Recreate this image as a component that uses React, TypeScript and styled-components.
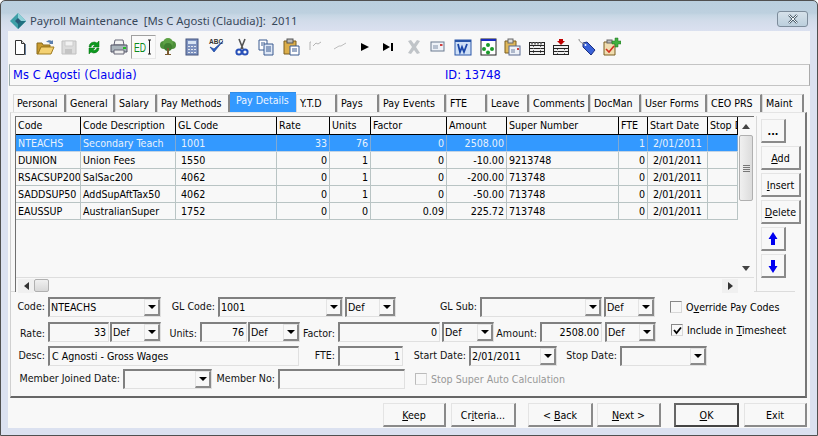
import React from "react";
import styled, { createGlobalStyle, css } from "styled-components";

const Global = createGlobalStyle`
  html, body { margin: 0; padding: 0; background: #fff; }
  body { font-family: "DejaVu Sans Condensed", "DejaVu Sans", sans-serif; font-size: 10.6px; color: #000; }
`;
const Win = styled.div`
  width: 818px; height: 436px; box-sizing: border-box; overflow: hidden;
  display: flex; flex-direction: column;
  border: 1px solid #505050; border-radius: 5px 5px 0 0;
  background: linear-gradient(#bacfde 0, #bdd0df 12px, #c6d6e4 14px, #d2dcea 20px, #dbe1f0 30px);
`;
const TitleBar = styled.div`
  height: 30px; flex: none; display: flex; align-items: center; box-sizing: border-box;
  padding: 9px 9px 0 9px; gap: 4px;
`;
const TitleText = styled.div`
  flex: 1; font-size: 11.3px; color: #37475a; white-space: pre; font-family: "Noto Sans", sans-serif;
`;
const CloseBtn = styled.div`
  width: 31px; height: 16px; box-sizing: border-box; margin-top: -3px; margin-right: 0;
  border: 1px solid #7d8c9b; border-radius: 3px; background: linear-gradient(#d6e1ea, #bccfdd);
  display: flex; align-items: center; justify-content: center;
`;
const Body = styled.div`
  flex: 1; margin: 0 7px 7px 7px; background: #f8f8f8; display: flex; flex-direction: column; min-height: 0;
`;
const Toolbar = styled.div`
  height: 31px; flex: none; display: flex; align-items: center;
`;
const ToolCell = styled.div<{ $pressed?: boolean }>`
  width: 24.6px; height: 24px; flex: none; display: flex; align-items: center; justify-content: center; box-sizing: border-box;
  ${p => p.$pressed && css`border: 1px solid #a0a0a0; border-right-color: #e8e8e8; border-bottom-color: #e8e8e8; background: #fafafa;`}
`;
const NameBar = styled.div`
  height: 22px; flex: none; margin: 2px 0 0 1px; box-sizing: border-box; display: flex; align-items: center;
  border: 1px solid #c4c4c4; border-right-color: #aaa; border-left-color: #9aa; color: #0000f0;
  padding-left: 3px;
  font-family: "DejaVu Sans", sans-serif;
`;
const NameText = styled.div`width: 432px; font-size: 11.4px; letter-spacing: 0.1px;`;
const IdText = styled.div`font-size: 11.4px;`;
const TabRow = styled.div`
  display: flex; height: 20px; margin-top: 6px; padding-left: 5px; flex: none; align-items: flex-end;
`;
const Tab = styled.div<{ $w: number; $on?: boolean }>`
  width: ${p => p.$w}px; flex: none; box-sizing: border-box; white-space: nowrap; overflow: hidden;
  height: ${p => (p.$on ? 20 : 18)}px; margin-right: 0; padding: 0 0 0 ${p => (p.$on ? 6 : 3)}px;
  display: flex; align-items: center;
  ${p => p.$on
    ? css`background: #3399ff; color: #eef5ff; padding-bottom: 5px; border-top: 1px solid #2f8ce6;`
    : css`padding-bottom: 2px; border-top: 1px solid #dcdcdc; border-left: 1px solid #d8d8d8; border-right: 2px solid #888;`}
`;
const Panel = styled.div`
  width: 797px; height: 286px; margin-left: 2px; flex: none; box-sizing: border-box; display: flex; flex-direction: column;
  border-left: 1px solid #d0d0d0; border-right: 2px solid #777; border-bottom: 2px solid #666; border-top: 1px solid #e4e4e4;
`;
const TopArea = styled.div`
  height: 179px; flex: none; display: flex; padding: 3px 0 0 4px; box-sizing: border-box; margin-right: 10px; border-bottom: 1px solid #dcdcdc;
`;
const GridBox = styled.div`
  width: 739px; height: 176px; flex: none; display: flex; flex-direction: column; box-sizing: border-box;
  border-left: 1px solid #707070; border-top: 1px solid #707070;
`;
const GridMain = styled.div`height: 160px; flex: none; display: flex; border-bottom: 1px solid #dedede;`;
const Cols = styled.div`width: 722px; flex: none; overflow: hidden;`;
const Row = styled.div<{ $sel?: boolean }>`
  display: flex; height: 17px; box-sizing: border-box; flex: none;
  border-bottom: 1px solid #b9c4c4;
  ${p => p.$sel && css`background: #3399ff; color: #e9f2fc; border-bottom-color: #c4d4e4;`}
`;
const HeadRow = styled.div`
  display: flex; height: 18px; box-sizing: border-box; border-bottom: 1px solid #000;
`;
const Cell = styled.div<{ $w: number; $right?: boolean; $sel?: boolean }>`
  width: ${p => p.$w}px; flex: none; box-sizing: border-box; overflow: hidden; white-space: pre; line-height: 16px;
  padding: 0 ${p => (p.$right ? 2 : 0)}px 0 ${p => (p.$right ? 0 : 2)}px; text-align: ${p => (p.$right ? "right" : "left")};
  border-right: 1px solid ${p => (p.$sel ? "#7fa9d4" : "#b9c4c4")};
`;
const HeadCell = styled.div<{ $w: number }>`
  width: ${p => p.$w}px; flex: none; box-sizing: border-box; overflow: hidden; white-space: pre; line-height: 16px;
  padding-left: 2px; border-right: 1px solid #000;
`;
const VScroll = styled.div`
  width: 15px; flex: none; display: flex; flex-direction: column; align-items: stretch; background: #f8f8f8; position: relative;
`;
const ScrollEnd = styled.div`height: 18px; display: flex; align-items: center; justify-content: center; flex: none;`;
const VThumb = styled.div`
  height: 66px; flex: none; box-sizing: border-box; margin: 0 0 0 1px; border: 1px solid #b0b0b0; border-radius: 2px;
  background: linear-gradient(90deg, #f0f0f0, #dcdcdc); display: flex; flex-direction: column; gap: 1px; align-items: center; justify-content: center;
`;
const Grip = styled.div`width: 7px; height: 1px; background: #777;`;
const Spacer = styled.div`flex: 1;`;
const RightGap = styled.div`width: 16px; flex: none;`;
const HScroll = styled.div`
  height: 15px; flex: none; display: flex; align-items: center; padding-left: 2px; background: #f8f8f8;
`;
const HArrow = styled.div`width: 16px; height: 14px; display: flex; align-items: center; justify-content: center; flex: none; background: #f0f0f0;`;
const HThumb = styled.div`
  width: 15px; height: 13px; flex: none; box-sizing: border-box; border: 1px solid #b0b0b0; border-radius: 2px;
  background: linear-gradient(#f0f0f0, #d8d8d8);
`;
const SideCol = styled.div`
  display: flex; flex-direction: column; align-items: flex-start; flex: none; border-left: 1px solid #d8d8d8; height: 176px; margin-left: 2px; padding: 3px 0 0 4px; box-sizing: border-box;
`;
const raised = css`
  box-sizing: border-box; background: #f8f8f8;
  border-top: 1px solid #e4e4e4; border-left: 1px solid #e4e4e4; border-right: 2px solid #8a8a8a; border-bottom: 2px solid #8a8a8a;
`;
const SideBtn = styled.div<{ $w: number }>`
  ${raised}
  width: ${p => p.$w}px; height: 24px; margin-bottom: 3px; flex: none; display: flex; align-items: center; justify-content: center;
`;
const Form = styled.div`
  flex: 1; display: flex; flex-direction: column; padding-top: 5px; box-sizing: border-box;
`;
const FRow = styled.div<{ $h: number }>`
  display: flex; height: ${p => p.$h}px; flex: none; align-items: flex-start;
`;
const Lbl = styled.div<{ $w: number; $low?: boolean }>`
  width: ${p => p.$w}px; flex: none; box-sizing: border-box; padding-right: 3px; text-align: right; white-space: nowrap; height: 20px;
  line-height: ${p => (p.$low ? 22 : 18)}px; color: #111;
`;
const field = css`
  height: 20px; flex: none; box-sizing: border-box; background: #f8f8f8;
  border-top: 2px solid #808080; border-left: 2px solid #808080; border-right: 1px solid #e0e0e0; border-bottom: 1px solid #e0e0e0;
  line-height: 16px; white-space: nowrap; overflow: hidden;
`;
const Input = styled.div<{ $w: number; $right?: boolean; $ml?: number }>`
  ${field}
  width: ${p => p.$w}px; margin-left: ${p => p.$ml ?? 0}px;
  text-align: ${p => (p.$right ? "right" : "left")}; padding: 0 2px;
`;
const ComboBox = styled.div<{ $w: number; $ml?: number }>`
  ${field}
  width: ${p => p.$w}px; margin-left: ${p => p.$ml ?? 0}px; display: flex; padding-left: 1px;
`;
const ComboText = styled.div`flex: 1; overflow: hidden;`;
const ComboBtn = styled.div`
  ${raised}
  width: 16px; height: 17px; flex: none; display: flex; align-items: center; justify-content: center; margin-right: 0;
`;
const Tri = styled.div`
  width: 0; height: 0; border-left: 4px solid transparent; border-right: 4px solid transparent; border-top: 4px solid #000;
`;
const CheckWrap = styled.div<{ $ml: number; $grey?: boolean; $up?: boolean }>`
  display: flex; align-items: center; gap: 4px; margin-left: ${p => p.$ml}px; height: ${p => (p.$up ? 16 : 19)}px; flex: none; white-space: nowrap;
  color: ${p => (p.$grey ? "#999" : "#000")};
`;
const Box = styled.div<{ $grey?: boolean }>`
  width: 12px; height: 12px; box-sizing: border-box; flex: none; background: #f8f8f8; display: flex; align-items: center; justify-content: center;
  border: 1px solid ${p => (p.$grey ? "#bbb" : "#888")}; border-right-color: #d8d8d8; border-bottom-color: #d8d8d8;
`;
const Footer = styled.div`
  flex: 1; display: flex; padding: 5px 0 0 375px; align-items: flex-start;
`;
const FootBtn = styled.div<{ $w: number; $ml: number; $def?: boolean }>`
  ${raised}
  width: ${p => p.$w}px; height: 24px; margin-left: ${p => p.$ml}px; flex: none; display: flex; align-items: center; justify-content: center;
  ${p => p.$def && css`border: 2px solid #666; border-right-color: #444; border-bottom-color: #444;`}
`;

const S: React.FC<{ children: React.ReactNode }> = ({ children }) => (
  <svg width={20} height={20} viewBox="0 0 20 20">{children}</svg>
);

const icons: React.ReactNode[] = [
  <S key="new"><path d="M5.500 3.500h6l3 3v11h-9z" fill="#fff" stroke="#333" /><path d="M11.500 3.500v3h3" fill="#ddd" stroke="#333" /><path d="M15.500 7v11" stroke="#6680a0" /></S>,
  <S key="open"><path d="M2 6h5l1 2h7v2H6l-3 7H2z" fill="#c99b30" stroke="#8a6a1a" /><path d="M3 17l3-7h13l-3 7z" fill="#f4d172" stroke="#a07c20" /><path d="M11 5c2-2 4-2 6-1l1-1v4h-4l1-1c-1-1-3-1-4-1z" fill="#5a7fb0" /></S>,
  <S key="save"><path d="M3 4h14v13H3z" fill="#dcdcdc" stroke="#c0c0c0" /><path d="M6 4h8v5H6z" fill="#f2f2f2" stroke="#ccc" /><path d="M6 12h7v5H6z" fill="#c4c4c4" /></S>,
  <S key="ref"><path d="M5 10a5 5 0 0 1 8-4l2-2v6h-6l2-2a3 3 0 0 0-4 2z" fill="#0d9a1f" stroke="#067012" strokeWidth=".5" /><path d="M15 11a5 5 0 0 1-8 4l-2 2v-6h6l-2 2a3 3 0 0 0 4-2z" fill="#0d9a1f" stroke="#067012" strokeWidth=".5" /></S>,
  <S key="print"><path d="M6 3h8l1 5H5z" fill="#f4f4f4" stroke="#667" /><path d="M2 8h16v7H2z" fill="#aab4bc" stroke="#556" /><path d="M5 13h10v4H5z" fill="#eee" stroke="#667" /><rect x="14" y="10" width="3" height="2" fill="#2b2" /></S>,
  <S key="ed"><text x="1" y="15" fontFamily="Liberation Sans, sans-serif" fontSize="13" fill="#0a8a1a" textLength="12" lengthAdjust="spacingAndGlyphs">ED</text><path d="M15 3h3M16.500 3v14M15 17h3" stroke="#222" fill="none" /></S>,
  <S key="tree"><circle cx="6" cy="8" r="4" fill="#4d8f3a" /><circle cx="14" cy="8" r="4" fill="#4d8f3a" /><circle cx="10" cy="6" r="5" fill="#5ca044" /><circle cx="10" cy="10" r="4" fill="#3f7f30" /><path d="M9 11h2v6h2v1H7v-1h2z" fill="#7a5a30" /></S>,
  <S key="calc"><rect x="4" y="2" width="12" height="16" fill="#7f93c0" stroke="#44557f" /><rect x="6" y="4" width="8" height="3" fill="#d8e4f4" /><path d="M6 9h2v1H6zM9 9h2v1H9zM12 9h2v1h-2zM6 12h2v1H6zM9 12h2v1H9zM12 12h2v1h-2zM6 15h2v1H6zM9 15h2v1H9zM12 15h2v1h-2z" fill="#e4e8f0" /></S>,
  <S key="abc"><text x="2" y="7" fontFamily="Liberation Sans, sans-serif" fontSize="6.5" fontWeight="bold" fill="#333">ABC</text><path d="M3 10l4 5 9-11-9 8z" fill="#2a5fc8" stroke="#1a3f90" strokeWidth=".7" /></S>,
  <S key="cut"><path d="M7 2l4 10M13 2l-4 10" stroke="#555" strokeWidth="1.6" /><circle cx="7" cy="15" r="2.600" fill="none" stroke="#2850b8" strokeWidth="2" /><circle cx="13" cy="15" r="2.600" fill="none" stroke="#2850b8" strokeWidth="2" /></S>,
  <S key="copy"><path d="M3 3h8v10H3z" fill="#fff" stroke="#3a5a90" /><path d="M8 7h9v11H8z" fill="#dfe8f6" stroke="#3a5a90" /><path d="M10 10h5M10 12h5M10 14h5M5 6h4M5 8h2" stroke="#3a5a90" /></S>,
  <S key="paste"><path d="M3 4h12v13H3z" fill="#dcae4a" stroke="#7a5f20" /><rect x="6" y="2" width="6" height="4" fill="#bbb" stroke="#555" /><path d="M9 9h9v9H9z" fill="#fff" stroke="#3a5a90" /><path d="M11 12h5M11 14h5" stroke="#3a5a90" /></S>,
  <S key="f1"><path d="M5 5v8M5 5h1M8 9l3-3 2 1 3-2" stroke="#b4b4b4" fill="none" /></S>,
  <S key="f2"><path d="M4 12l5-3 2 0 5-3" stroke="#bcbcbc" fill="none" /></S>,
  <S key="play"><path d="M6 6l8 4-8 4z" fill="#000" /></S>,
  <S key="nx"><path d="M4 6l7 4-7 4zM12 6h2v8h-2z" fill="#000" /></S>,
  <S key="x"><path d="M4 4l3-1 3 4 3-4 3 1-4 6 4 6-3 1-3-4-3 4-3-1 4-6z" fill="#c0c4c8" /></S>,
  <S key="mail"><rect x="3" y="5" width="13" height="9" fill="#eef2f8" stroke="#6a7a90" /><rect x="12" y="7" width="2.500" height="2" fill="#d04040" /><path d="M5 9h5M5 11h5" stroke="#8090a8" /></S>,
  <S key="word"><rect x="2" y="3" width="16" height="15" fill="#cfe0f6" stroke="#2a56a8" /><path d="M2 3h16v2H2z" fill="#2a56a8" /><path d="M5 7l2 8 2-5 2 5 3-8" fill="none" stroke="#1c48a8" strokeWidth="1.800" /></S>,
  <S key="dots"><rect x="3" y="2" width="15" height="16" fill="#fff" stroke="#222" /><path d="M3 2h15v2H3z" fill="#1a2ac0" /><circle cx="10" cy="8" r="2" fill="#1a9a2a" /><circle cx="6" cy="12" r="2" fill="#1a9a2a" /><circle cx="14" cy="12" r="2" fill="#1a9a2a" /><circle cx="10" cy="15.500" r="2" fill="#1a9a2a" /></S>,
  <S key="clipm"><path d="M3 4h11v12H3z" fill="#e0b85a" stroke="#7a5f20" /><rect x="6" y="2" width="5" height="4" fill="#ddd" stroke="#666" /><rect x="7" y="9" width="11" height="9" fill="#eef2f8" stroke="#5a6a90" /><rect x="15" y="11" width="2" height="2" fill="#d04040" /><path d="M9 13h4M9 15h4" stroke="#7080a0" /></S>,
  <S key="tb1"><rect x="2.500" y="5.500" width="15" height="12" fill="#f0f0f0" stroke="#222" /><path d="M2 8.500h16M2 11.500h16M2 14.500h16" stroke="#222" /><path d="M4 6.500h12" stroke="#777" strokeDasharray="2 1" strokeWidth="2" /><path d="M6.500 9v8M13.500 9v8" stroke="#666" strokeDasharray="1 1" /></S>,
  <S key="tb2"><path d="M8 2h4v2h2l-4 4-4-4h2z" fill="#c00000" /><rect x="2.500" y="8.500" width="15" height="9" fill="#f0f0f0" stroke="#222" /><path d="M2 11.500h16M2 14.500h16" stroke="#222" /><path d="M6.500 12v6M13.500 12v6" stroke="#666" strokeDasharray="1 1" /></S>,
  <S key="tag"><path d="M7 6l4-1 8 8-4 5-8-8z" fill="#3a62d8" stroke="#1a2f80" /><circle cx="9.500" cy="8" r="1" fill="#fff" /><path d="M9 7C6 6 3 5 3 2" fill="none" stroke="#888" /></S>,
  <S key="cadd"><path d="M3 5h11v13H3z" fill="#f0ddb0" stroke="#7a5f20" /><rect x="6" y="3" width="5" height="3" fill="#bbb" stroke="#666" /><path d="M5 12l3 3 5-6" fill="none" stroke="#d03020" strokeWidth="1.600" /><path d="M14 1h3v3h3v3h-3v3h-3V7h-3V4h3z" fill="#40b040" stroke="#207020" strokeWidth=".5" /></S>,
];

const tabs: [string, number][] = [
  ["Personal", 53], ["General", 49], ["Salary", 42], ["Pay Methods", 73], ["Pay Details", 66], ["Y.T.D", 41], ["Pays", 42],
  ["Pay Events", 67], ["FTE", 41], ["Leave", 42], ["Comments", 61], ["DocMan", 51], ["User Forms", 66], ["CEO PRS", 55], ["Maint", 42],
];
const colW = [65, 95, 101, 53, 41, 76, 60, 112, 29, 60, 30];
const heads = ["Code", "Code Description", "GL Code", "Rate", "Units", "Factor", "Amount", "Super Number", "FTE", "Start Date", "Stop Date"];
const rightCols = new Set([3, 4, 5, 6, 8]);
const rows: string[][] = [
  ["NTEACHS", "Secondary Teach", " 1001", "33", "76", "0", "2508.00", "", "1", " 2/01/2011", ""],
  ["DUNION", "Union Fees", " 1550", "0", "1", "0", "-10.00", "9213748", "0", " 2/01/2011", ""],
  ["RSACSUP200", "SalSac200", " 4062", "0", "1", "0", "-200.00", "713748", "0", " 2/01/2011", ""],
  ["SADDSUP50", "AddSupAftTax50", " 4062", "0", "1", "0", "-50.00", "713748", "0", " 2/01/2011", ""],
  ["EAUSSUP", "AustralianSuper", " 1752", "0", "0", "0.09", "225.72", "713748", "0", " 2/01/2011", ""],
];

const Combo: React.FC<{ w: number; v?: string; ml?: number }> = ({ w, v, ml }) => (
  <ComboBox $w={w} $ml={ml}>
    <ComboText>{v}</ComboText>
    <ComboBtn><Tri /></ComboBtn>
  </ComboBox>
);

export default function App() {
  return (
    <>
      <Global />
      <Win>
        <TitleBar>
          <svg width="16" height="16" viewBox="0 0 16 16">
            <path d="M8 0l8 8-8 8-8-8z" fill="#3fa0a8" />
            <path d="M8 0l8 8H8z" fill="#8fd0d8" />
            <path d="M8 8h8l-8 8z" fill="#1f6f80" />
            <path d="M5 8l3-3 3 3-3 3z" fill="#2a5a78" />
          </svg>
          <TitleText>{"Payroll Maintenance  [Ms C Agosti (Claudia)]:  2011"}</TitleText>
          <CloseBtn>
            <svg width="12" height="10" viewBox="0 0 12 10">
              <path d="M2 1l8 8M10 1L2 9" stroke="#4a5a68" strokeWidth="2.400" />
              <path d="M2 1l8 8M10 1L2 9" stroke="#f4f8fb" strokeWidth="1" />
            </svg>
          </CloseBtn>
        </TitleBar>
        <Body>
          <Toolbar>
            {icons.map((ic, i) => <ToolCell key={i} $pressed={i === 5}>{ic}</ToolCell>)}
          </Toolbar>
          <NameBar>
            <NameText>Ms C Agosti (Claudia)</NameText>
            <IdText>ID: 13748</IdText>
          </NameBar>
          <TabRow>
            {tabs.map(([t, w]) => <Tab key={t} $w={w} $on={t === "Pay Details"}>{t}</Tab>)}
          </TabRow>
          <Panel>
            <TopArea>
              <GridBox>
                <GridMain>
                  <Cols>
                    <HeadRow>{heads.map((h, i) => <HeadCell key={h} $w={colW[i]}>{h}</HeadCell>)}</HeadRow>
                    {rows.map((r, ri) => (
                      <Row key={ri} $sel={ri === 0}>
                        {r.map((c, i) => <Cell key={i} $w={colW[i]} $right={rightCols.has(i)} $sel={ri === 0}>{c}</Cell>)}
                      </Row>
                    ))}
                  </Cols>
                  <VScroll>
                    <ScrollEnd>
                      <svg width="8" height="5" viewBox="0 0 8 5"><path d="M4 0l4 5H0z" fill="#444" /></svg>
                    </ScrollEnd>
                    <VThumb><Grip /><Grip /><Grip /><Grip /></VThumb>
                    <Spacer />
                    <ScrollEnd>
                      <svg width="8" height="5" viewBox="0 0 8 5"><path d="M4 5l4-5H0z" fill="#444" /></svg>
                    </ScrollEnd>
                  </VScroll>
                </GridMain>
                <HScroll>
                  <HArrow><svg width="5" height="8" viewBox="0 0 5 8"><path d="M0 4l5-4v8z" fill="#333" /></svg></HArrow>
                  <HThumb />
                  <Spacer />
                  <HArrow><svg width="5" height="8" viewBox="0 0 5 8"><path d="M5 4L0 0v8z" fill="#333" /></svg></HArrow>
                  <RightGap />
                </HScroll>
              </GridBox>
              <SideCol>
                <SideBtn $w={25}><b>...</b></SideBtn>
                <SideBtn $w={40}><span><u>A</u>dd</span></SideBtn>
                <SideBtn $w={40}><span><u>I</u>nsert</span></SideBtn>
                <SideBtn $w={40}><span><u>D</u>elete</span></SideBtn>
                <SideBtn $w={25}>
                  <svg width="10" height="14" viewBox="0 0 10 14"><path d="M5 0l4.500 7H7v6H3V7H.5z" fill="#0000f0" /></svg>
                </SideBtn>
                <SideBtn $w={25}>
                  <svg width="10" height="14" viewBox="0 0 10 14"><path d="M5 14L.5 7H3V1h4v6h2.500z" fill="#0000f0" /></svg>
                </SideBtn>
              </SideCol>
            </TopArea>
            <Form>
              <FRow $h={25}>
                <Lbl $w={37}>Code:</Lbl><Combo w={113} v="NTEACHS" />
                <Lbl $w={57}>GL Code:</Lbl><Combo w={125} v="1001" /><Combo w={51} v="Def" ml={2} />
                <Lbl $w={84}>GL Sub:</Lbl><Combo w={122} /><Combo w={51} v="Def" ml={2} />
                <CheckWrap $ml={15}><Box /><span>O<u>v</u>erride Pay Codes</span></CheckWrap>
              </FRow>
              <FRow $h={24}>
                <Lbl $w={37} $low>Rate:</Lbl><Input $w={61} $right>33</Input><Combo w={51} v="Def" ml={1} />
                <Lbl $w={39} $low>Units:</Lbl><Input $w={47} $right>76</Input><Combo w={52} v="Def" ml={1} />
                <Lbl $w={38} $low>Factor:</Lbl><Input $w={102} $right>0</Input><Combo w={52} v="Def" ml={2} />
                <Lbl $w={46} $low>Amount:</Lbl><Input $w={62} $right>2508.00</Input><Combo w={51} v="Def" ml={3} />
                <CheckWrap $ml={15} $up>
                  <Box><svg width="9" height="9" viewBox="0 0 9 9"><path d="M1 4l2.500 3L8 1.500" fill="none" stroke="#000" strokeWidth="1.800" /></svg></Box>
                  <span>Include in <u>T</u>imesheet</span>
                </CheckWrap>
              </FRow>
              <FRow $h={23}>
                <Lbl $w={37}>Desc:</Lbl><Input $w={251}>C Agnosti - Gross Wages</Input>
                <Lbl $w={39}>FTE:</Lbl><Input $w={65} $right>1</Input>
                <Lbl $w={66}>Start Date:</Lbl><Combo w={88} v="2/01/2011" />
                <Lbl $w={63}>Stop Date:</Lbl><Combo w={87} />
              </FRow>
              <FRow $h={20}>
                <Lbl $w={112}>Member Joined Date:</Lbl><Combo w={89} />
                <Lbl $w={66}>Member No:</Lbl><Input $w={127} />
                <CheckWrap $ml={10} $grey><Box $grey /><span>Stop Super Auto Calculation</span></CheckWrap>
              </FRow>
            </Form>
          </Panel>
          <Footer>
            <FootBtn $w={63} $ml={0}><span><u>K</u>eep</span></FootBtn>
            <FootBtn $w={65} $ml={5}><span>Cr<u>i</u>teria...</span></FootBtn>
            <FootBtn $w={65} $ml={12}><span>&lt; <u>B</u>ack</span></FootBtn>
            <FootBtn $w={64} $ml={4}><span><u>N</u>ext &gt;</span></FootBtn>
            <FootBtn $w={65} $ml={13} $def><span><u>O</u>K</span></FootBtn>
            <FootBtn $w={63} $ml={5}>Exit</FootBtn>
          </Footer>
        </Body>
      </Win>
    </>
  );
}
